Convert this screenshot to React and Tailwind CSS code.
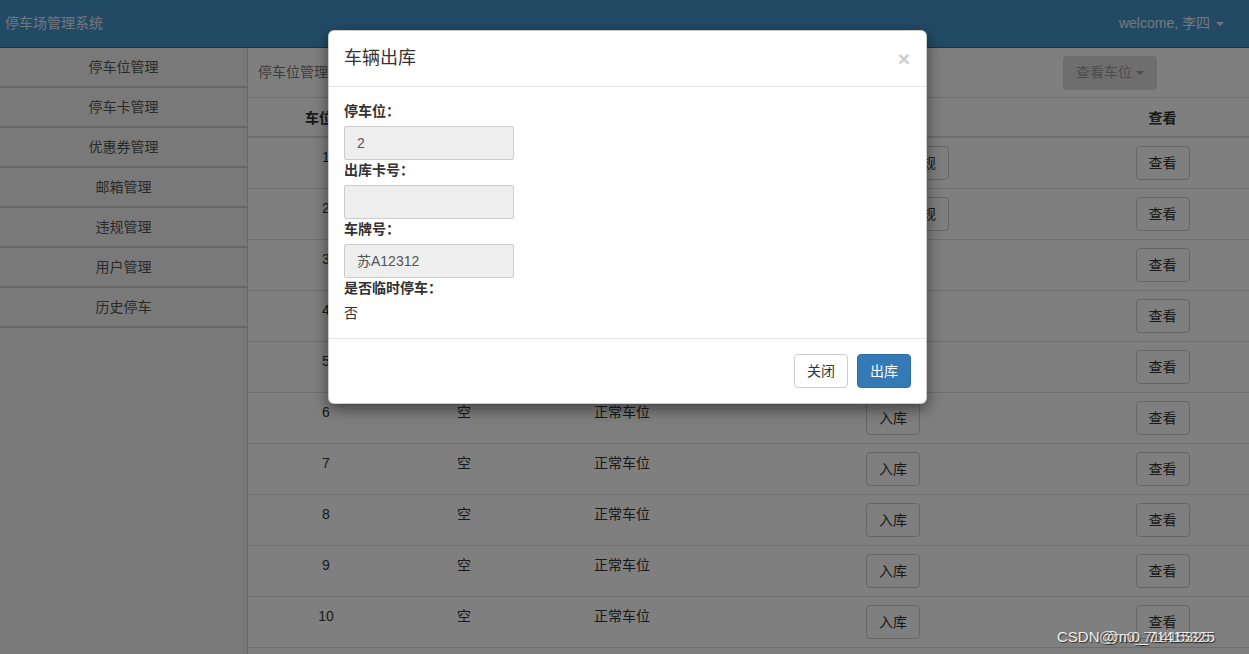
import React from 'react';

const font = { fontFamily: '"Liberation Sans", "Noto Sans CJK SC", sans-serif' };

const menu = ['停车位管理', '停车卡管理', '优惠券管理', '邮箱管理', '违规管理', '用户管理', '历史停车'];

const rows = [1, 2, 3, 4, 5, 6, 7, 8, 9, 10].map((n) => ({
    no: n,
    state: n <= 2 ? '占用' : '空',
    type: '正常车位',
    busy: n <= 2,
}));

function Btn({ children, className = '' }) {
    return (
        <button className={`h-[34px] px-3 border border-[#ccc] rounded-[4px] bg-white text-[14px] text-[#333] ${className}`}>
            {children}
        </button>
    );
}

function Field({ label, value }) {
    return (
        <div>
            <div className="h-5 leading-5 mb-[5px] font-bold text-[14px] text-[#333]">{label}</div>
            <div className="w-[170px] h-[34px] px-3 leading-[32px] border border-[#ccc] rounded-[2px] bg-[#eee] text-[14px] text-[#555]">
                {value}
            </div>
        </div>
    );
}

export default function App() {
    return (
        <div className="relative w-full h-[654px] overflow-hidden bg-white" style={font}>
            {/* 頂部導航 */}
            <div className="h-[48px] bg-[#4694ca] border-b border-[#2d6890] flex items-center justify-between pl-[5px] pr-[25px] text-[14px]">
                <span className="text-[#e6edf3]">停车场管理系统</span>
                <span className="text-[#e8eef4] flex items-center gap-[6px]">
                    welcome, 李四
                    <span className="inline-block w-0 h-0 border-l-4 border-r-4 border-t-4 border-l-transparent border-r-transparent border-t-[#e8eef4]" />
                </span>
            </div>

            <div className="flex h-[606px]">
                {/* 側邊選單 */}
                <div className="w-[248px] shrink-0 bg-[#f2f2f2] border-r border-[#d0d0d0]">
                    {menu.map((m) => (
                        <div key={m} className="h-10 flex items-center justify-center border-b-2 border-[#cfcfcf] text-[14px] text-[#555] pt-[1px]">
                            {m}
                        </div>
                    ))}
                </div>

                {/* 主內容 */}
                <div className="flex-1 bg-white">
                    <div className="h-[50px] flex items-center justify-between pl-[10px] pr-[92px] border-b border-[#ddd]">
                        <span className="text-[14px] text-[#777]">停车位管理</span>
                        <div className="h-[34px] w-[94px] flex items-center justify-center gap-1 rounded-[4px] bg-[#dcdcdc] text-[14px] text-[#9a9a9a]">
                            查看车位
                            <span className="inline-block w-0 h-0 border-l-4 border-r-4 border-t-4 border-l-transparent border-r-transparent border-t-[#9a9a9a]" />
                        </div>
                    </div>

                    <div className="flex h-10 border-b-2 border-[#ddd] text-[14px] font-bold text-[#333] text-center leading-10">
                        <div className="w-[156px]">车位号</div>
                        <div className="w-[120px]">状态</div>
                        <div className="w-[196px]">类型</div>
                        <div className="w-[346px]">操作</div>
                        <div className="flex-1 pl-[10px]">查看</div>
                    </div>

                    {rows.map((r) => (
                        <div key={r.no} className="flex h-[51px] border-b border-[#ddd] text-[14px] text-[#333] text-center">
                            <div className="w-[156px] pt-[9px]">{r.no}</div>
                            <div className="w-[120px] pt-[9px]">{r.state}</div>
                            <div className="w-[196px] pt-[9px]">{r.type}</div>
                            <div className="w-[346px] pt-[8px] flex justify-center gap-1">
                                {r.busy ? (
                                    <>
                                        <Btn>出库</Btn>
                                        <Btn>违规</Btn>
                                    </>
                                ) : (
                                    <Btn>入库</Btn>
                                )}
                            </div>
                            <div className="flex-1 pl-[10px] pt-[8px] flex justify-center">
                                <Btn>查看</Btn>
                            </div>
                        </div>
                    ))}
                </div>
            </div>

            {/* 遮罩 */}
            <div className="absolute inset-0 bg-black/50" />

            {/* 車輛出庫對話框 */}
            <div className="absolute left-[328px] top-[30px] w-[599px] bg-white rounded-[6px] border border-black/20 shadow-[0_5px_15px_rgba(0,0,0,0.5)]">
                <div className="flex items-center justify-between px-[15px] py-[15px] border-b border-[#e5e5e5]">
                    <span className="text-[18px] leading-[25px] text-[#333]">车辆出库</span>
                    <span className="text-[21px] leading-none font-bold text-[#ccc] mr-[1px]">×</span>
                </div>
                <div className="px-[15px] pt-[14px] pb-[15px] flex flex-col">
                    <Field label="停车位：" value="2" />
                    <Field label="出库卡号：" value="" />
                    <Field label="车牌号：" value="苏A12312" />
                    <div className="h-5 leading-5 mb-[5px] font-bold text-[14px] text-[#333]">是否临时停车：</div>
                    <div className="h-5 leading-5 text-[14px] text-[#333]">否</div>
                </div>
                <div className="flex justify-end gap-[9px] p-[15px] border-t border-[#e5e5e5]">
                    <Btn>关闭</Btn>
                    <button className="h-[34px] px-3 border border-[#2e6da4] rounded-[4px] bg-[#337ab7] text-[14px] text-white">出库</button>
                </div>
            </div>

            {/* 水印 */}
            <div className="absolute left-[1057px] top-[626px] text-[15px] text-white/90 [text-shadow:1px_1px_1px_rgba(0,0,0,0.6)]">
                CSDN @m0_71415325
            </div>
            <div className="absolute left-[1099px] top-[626px] text-[15px] text-white/70 [text-shadow:1px_1px_1px_rgba(0,0,0,0.6)]">
                @m0_71415325
            </div>
        </div>
    );
}
